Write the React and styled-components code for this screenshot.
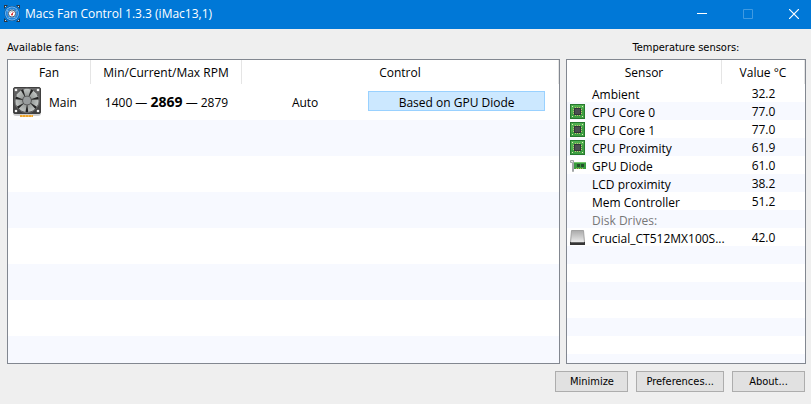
import styled, { createGlobalStyle } from "styled-components";

const GlobalStyle = createGlobalStyle`
  * {
    box-sizing: border-box;
  }

  body {
    margin: 0;
    background: #efefef;
    color: #000;
    font-family: "Open Sans", "Noto Sans", sans-serif;
    font-size: 12px;
    line-height: 18px;
  }

  button {
    font: inherit;
    color: inherit;
    padding: 0;
  }

  svg {
    display: block;
  }
`;

const Window = styled.div`
  min-height: 100vh;
  display: flex;
  flex-direction: column;
`;

const TitleBar = styled.header`
  display: flex;
  align-items: center;
  height: 29px;
  padding: 0 7px 2px 4px;
  background: #0078d7;
  color: #fff;
`;

const WindowTitle = styled.h1`
  flex: 1;
  margin: 0 0 0 5px;
  font-size: 12px;
  font-weight: 400;
`;

const WindowControls = styled.div`
  display: flex;
  gap: 26px;
`;

const WindowButton = styled.button`
  display: grid;
  place-items: center;
  width: 20px;
  height: 20px;
  border: 0;
  background: none;

  &:disabled {
    opacity: 0.25;
  }
`;

const Main = styled.main`
  flex: 1;
  display: grid;
  grid-template-columns: minmax(0, 1fr) 240px;
  gap: 6px;
  padding: 10px 5px 0 7px;
`;

const Section = styled.section`
  display: flex;
  flex-direction: column;
`;

const Label = styled.h2`
  margin: 0;
  padding-bottom: 2px;
  font-family: "DejaVu Sans Condensed", "DejaVu Sans", sans-serif;
  font-size: 11px;
  font-weight: 400;
  text-align: ${(props) => props.$align || "left"};
`;

const List = styled.div`
  flex: 1;
  border: 1px solid #828790;
  background: repeating-linear-gradient(
      #fff 0 ${(props) => props.$row}px,
      #f7f9ff ${(props) => props.$row}px ${(props) => props.$row * 2}px
    )
    0 24px #fff;
  background-repeat: no-repeat;
`;

const Table = styled.table`
  width: 100%;
  table-layout: fixed;
  border-collapse: separate;
  border-spacing: 0;
`;

const HeadCell = styled.th`
  width: ${(props) => props.$width || "auto"};
  height: 24px;
  padding: 2px 0 0;
  border-right: 1px solid #e5e5e5;
  font-weight: 400;
`;

const FanCell = styled.td`
  height: 36px;
  padding: 0;
  text-align: center;
  white-space: nowrap;
`;

const FanName = styled.div`
  display: flex;
  align-items: center;
  gap: 7px;
  padding-left: 4px;

  span {
    padding-top: 2px;
  }
`;

const CurrentSpeed = styled.strong`
  font-size: 14px;
  font-weight: 700;
`;

const FanControls = styled.div`
  display: grid;
  grid-template-columns: 5fr 7fr;
  align-items: center;
  padding: 0 14px 2px 0;
`;

const ModeButton = styled.button`
  height: 20px;
  padding-top: 1px;
  border: 1px solid ${(props) => (props.$active ? "#99d1ff" : "transparent")};
  background: ${(props) => (props.$active ? "#cce8ff" : "none")};
  line-height: 20px;
`;

const SensorName = styled.td`
  height: 18px;
  padding: 0 0 0 3px;
  color: ${(props) => (props.$muted ? "#777" : "inherit")};
`;

const SensorLine = styled.div`
  display: grid;
  grid-template-columns: 16px minmax(0, 1fr);
  align-items: center;
  gap: 6px;
  height: 18px;
  white-space: nowrap;
`;

const SensorText = styled.span`
  padding-top: 2px;
`;

const SensorValue = styled.td`
  padding: 2px 0 0;
  line-height: 16px;
  text-align: center;
`;

const Footer = styled.footer`
  display: flex;
  justify-content: flex-end;
  gap: 8px;
  padding: 7px 6px 12px;
`;

const FooterButton = styled.button`
  height: 21px;
  min-width: 73px;
  padding: 1px 9px 0;
  border: 1px solid #adadad;
  background: #e1e1e1;
  font-family: "DejaVu Sans Condensed", "DejaVu Sans", sans-serif;
  font-size: 11px;
`;

const sensors = [
  { name: "Ambient", value: "32.2" },
  { name: "CPU Core 0", value: "77.0", icon: "cpu" },
  { name: "CPU Core 1", value: "77.0", icon: "cpu" },
  { name: "CPU Proximity", value: "61.9", icon: "cpu" },
  { name: "GPU Diode", value: "61.0", icon: "gpu" },
  { name: "LCD proximity", value: "38.2" },
  { name: "Mem Controller", value: "51.2" },
  { name: "Disk Drives:", value: "", muted: true },
  { name: "Crucial_CT512MX100S...", value: "42.0", icon: "disk" }
];

const AppIcon = () => (
  <svg width="16" height="17" viewBox="0 0 16 17" aria-hidden="true">
    <path d="M0 0h4L0 4zM16 0v4l-4-4zM0 17v-4l4 4zM16 17h-4l4-4z" fill="#2b3442" />
    <path d="M1 1h1v1H1zM14 1h1v1h-1zM1 15h1v1H1zM14 15h1v1h-1z" fill="#d3dde6" />
    <circle cx="8" cy="8.5" r="7.5" fill="#1c4f88" />
    <circle cx="8" cy="8.5" r="6.9" fill="#7cc6ff" />
    <circle cx="8" cy="8.5" r="5.3" fill="none" stroke="#2485dc" strokeWidth="1.8" />
    <path d="M3 5.5 5 7M13 5.5 11 7M5 13l1-2M11 13l-1-2" stroke="#a6dcff" strokeWidth="0.8" />
    <circle cx="8" cy="8.5" r="3.6" fill="#fff" stroke="#2f4560" strokeWidth="0.9" />
    <path d="M6 7.5 8 6.2l2 1.3" fill="none" stroke="#999" strokeWidth="0.6" />
    <path d="m8 9.5 1.2-2.3" stroke="#d33" />
    <circle cx="8" cy="9.4" r="1" fill="#d22" />
  </svg>
);

const FanIcon = () => (
  <svg width="30" height="32" viewBox="0 0 30 32" aria-hidden="true">
    <defs>
      <linearGradient id="frame" x1="0" y1="0" x2="0" y2="1">
        <stop offset="0" stopColor="#686868" />
        <stop offset="1" stopColor="#3c3c3c" />
      </linearGradient>
      <linearGradient id="blade" x1="0" y1="0" x2="0" y2="1">
        <stop offset="0" stopColor="#c2c6c4" />
        <stop offset="1" stopColor="#8c908e" />
      </linearGradient>
    </defs>
    <rect x="1" y="3" width="28" height="27" rx="3" fill="#cfcfcf" />
    <path d="M8 29h13v2H8z" fill="#efa52d" />
    <path d="M10.5 29v2M13.5 29v2M16.5 29v2M19.5 29v2" stroke="#ffd88c" strokeWidth="0.5" />
    <rect x="1.5" y="1.5" width="27" height="26" rx="1.5" fill="url(#frame)" stroke="#404040" />
    <circle cx="15" cy="14.5" r="12.3" fill="#222" stroke="#6e6e6e" />
    {[0, 51, 103, 154, 206, 257, 309].map((angle) => (
      <path
        key={angle}
        d="M13.5 11.5 11.3 3.4c2.5-.8 5-.8 7.6.2l-2.7 7.9z"
        fill="url(#blade)"
        transform={`rotate(${angle} 15 14.5)`}
      />
    ))}
    <circle cx="15" cy="14.5" r="4.8" fill="#4e4e4e" />
    <circle cx="15" cy="14.5" r="3.9" fill="#989c9d" />
    {[[4, 4], [26, 4], [4, 25], [26, 25]].map(([x, y]) => (
      <circle key={`${x}-${y}`} cx={x} cy={y} r="1.3" fill="#f5f5f5" />
    ))}
  </svg>
);

const CpuIcon = () => (
  <svg width="16" height="16" viewBox="0 0 16 16" aria-hidden="true">
    <rect x="0.5" y="0.5" width="14" height="14" fill="#3d9f43" stroke="#27782e" />
    <path d="M1 1h13v3L1 10z" fill="#5dbb59" opacity="0.6" />
    <path d="M2 2h1v1H2zM12 2h1v1h-1zM2 12h1v1H2zM12 12h1v1h-1z" fill="#e1edba" />
    <path d="M5.5 3v9M7.5 3v9M9.5 3v9M3 5.5h9M3 7.5h9M3 9.5h9" stroke="#c2bd78" />
    <rect x="4" y="4" width="7" height="7" fill="#303538" />
    <rect x="5" y="5" width="5" height="5" fill="#4b4e51" />
  </svg>
);

const GpuIcon = () => (
  <svg width="16" height="16" viewBox="0 0 16 16" aria-hidden="true">
    <path d="M4 4h12v7H4z" fill="#399c3f" />
    <path d="M4 4.5h12" stroke="#78c66e" />
    <path d="M7 6h3v3H7zM11 6h3v3h-3z" fill="#254f2b" />
    <path d="M6 10.5h8" stroke="#c5b457" strokeDasharray="1 1" />
    <path d="M.5 2.5h3v11h-1v-9h-2z" fill="#e2e5e6" stroke="#a2a6a7" />
  </svg>
);

const DiskIcon = () => (
  <svg width="16" height="16" viewBox="0 0 16 16" aria-hidden="true">
    <defs>
      <linearGradient id="disk" x1="0" y1="0" x2="0" y2="1">
        <stop offset="0" stopColor="#aaa" />
        <stop offset="1" stopColor="#ececec" />
      </linearGradient>
    </defs>
    <path d="M1.5.5h12l1 12H.5z" fill="url(#disk)" stroke="#a2a2a2" />
    <path d="M0 12h15v3H0z" fill="#353535" />
    <path d="M1 12.5h13" stroke="#666" />
  </svg>
);

const icons = { cpu: CpuIcon, gpu: GpuIcon, disk: DiskIcon };

const SensorRow = ({ sensor }) => {
  const Icon = icons[sensor.icon];

  return (
    <tr>
      <SensorName $muted={sensor.muted}>
        <SensorLine>
          <span>{Icon && <Icon />}</span>
          <SensorText>{sensor.name}</SensorText>
        </SensorLine>
      </SensorName>
      <SensorValue>{sensor.value}</SensorValue>
    </tr>
  );
};

const App = () => {
  return (
    <Window>
      <GlobalStyle />
      <TitleBar>
        <AppIcon />
        <WindowTitle>Macs Fan Control 1.3.3 (iMac13,1)</WindowTitle>
        <WindowControls>
          <WindowButton aria-label="Minimize window">
            <svg width="10" height="10" viewBox="0 0 10 10">
              <path d="M0 4.5h10" stroke="#fff" />
            </svg>
          </WindowButton>
          <WindowButton aria-label="Maximize window" disabled>
            <svg width="10" height="10" viewBox="0 0 10 10">
              <path d="M.5.5h9v9h-9z" fill="none" stroke="#fff" />
            </svg>
          </WindowButton>
          <WindowButton aria-label="Close window">
            <svg width="10" height="10" viewBox="0 0 10 10">
              <path d="m0 0 10 10M10 0 0 10" stroke="#fff" strokeWidth="1.2" />
            </svg>
          </WindowButton>
        </WindowControls>
      </TitleBar>

      <Main>
        <Section>
          <Label>Available fans:</Label>
          <List $row={36}>
            <Table>
              <thead>
                <tr>
                  <HeadCell $width="83px">Fan</HeadCell>
                  <HeadCell $width="151px">Min/Current/Max RPM</HeadCell>
                  <HeadCell>Control</HeadCell>
                </tr>
              </thead>
              <tbody>
                <tr>
                  <FanCell>
                    <FanName>
                      <FanIcon />
                      <span>Main</span>
                    </FanName>
                  </FanCell>
                  <FanCell>
                    1400 — <CurrentSpeed>2869</CurrentSpeed> — 2879
                  </FanCell>
                  <FanCell>
                    <FanControls>
                      <ModeButton>Auto</ModeButton>
                      <ModeButton $active>Based on GPU Diode</ModeButton>
                    </FanControls>
                  </FanCell>
                </tr>
              </tbody>
            </Table>
          </List>
        </Section>

        <Section>
          <Label $align="center">Temperature sensors:</Label>
          <List $row={18}>
            <Table>
              <thead>
                <tr>
                  <HeadCell>Sensor</HeadCell>
                  <HeadCell $width="83px">Value °C</HeadCell>
                </tr>
              </thead>
              <tbody>
                {sensors.map((sensor) => (
                  <SensorRow key={sensor.name} sensor={sensor} />
                ))}
              </tbody>
            </Table>
          </List>
        </Section>
      </Main>

      <Footer>
        <FooterButton>Minimize</FooterButton>
        <FooterButton>Preferences...</FooterButton>
        <FooterButton>About...</FooterButton>
      </Footer>
    </Window>
  );
};

export default App;
